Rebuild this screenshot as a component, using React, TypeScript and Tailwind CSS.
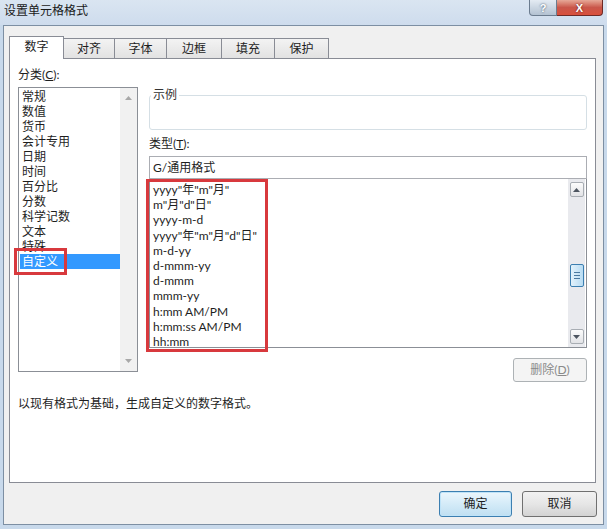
import React from 'react';

const categories = ['常规', '数值', '货币', '会计专用', '日期', '时间', '百分比', '分数', '科学记数', '文本', '特殊', '自定义'];
const formats = [
  'yyyy"年"m"月"',
  'm"月"d"日"',
  'yyyy-m-d',
  'yyyy"年"m"月"d"日"',
  'm-d-yy',
  'd-mmm-yy',
  'd-mmm',
  'mmm-yy',
  'h:mm AM/PM',
  'h:mm:ss AM/PM',
  'hh:mm',
];
const tabs = [
  { label: '对齐', w: 'w-[51px]' },
  { label: '字体', w: 'w-[52px]' },
  { label: '边框', w: 'w-[55px]' },
  { label: '填充', w: 'w-[53px]' },
  { label: '保护', w: 'w-[54px]' },
];

function Tri({ down, color }: { down?: boolean; color: string }) {
  return (
    <svg width="7" height="4" viewBox="0 0 7 4">
      <path d={down ? 'M0 0 L3.5 4 L7 0Z' : 'M0 4 L3.5 0 L7 4Z'} fill={color} />
    </svg>
  );
}

function ArrowBtn({ down }: { down?: boolean }) {
  return (
    <div className="w-[14px] h-[15px] mx-auto flex items-center justify-center rounded-[2px] border border-[#a8adb3] bg-gradient-to-b from-[#fcfcfc] to-[#e2e3e6]">
      <Tri down={down} color="#4d5560" />
    </div>
  );
}

export default function App() {
  return (
    <div className="w-[607px] h-[529px] bg-[#c8d9eb] flex flex-col overflow-hidden font-['Lato','Noto_Sans_CJK_SC',sans-serif] text-[12px] text-[#1e1e1e]">
      {/* Title bar */}
      <div className="h-[25px] shrink-0 flex items-start justify-between bg-gradient-to-b from-[#dae5f1] to-[#cedced]">
        <div className="pl-[4px] pt-[3px] leading-[16px] text-[#1a1a1a]">设置单元格格式</div>
        <div className="flex mr-[4px]">
          <div className="w-[28px] h-[16px] flex items-center justify-center rounded-bl-[4px] border border-t-0 border-[#6b7c8f] bg-gradient-to-b from-[#e4ebf3] to-[#b3c2d2] text-white font-bold font-['Liberation_Sans',sans-serif] text-[11px] leading-[12px] [text-shadow:0_0_2px_#2f4257]">
            ?
          </div>
          <div className="w-[46px] h-[16px] flex items-center justify-center rounded-br-[4px] border border-t-0 border-l-0 border-[#6e2a26] bg-gradient-to-b from-[#e6a898] via-[#c9564a] to-[#d9503c] text-white font-bold font-['Liberation_Sans',sans-serif] text-[11px] leading-[12px] [text-shadow:0_0_2px_#5a1410]">
            X
          </div>
        </div>
      </div>

      {/* Dialog body */}
      <div className="flex-1 mx-[3px] mb-[4px] border border-[#7d8fa3] bg-[#f0f0f0] flex flex-col pt-[10px] pl-[5px] pr-[7px]">
        {/* Tabs */}
        <div className="h-[22px] flex items-end shrink-0">
          <div className="relative z-10 -mb-px w-[55px] h-[23px] bg-white border border-b-0 border-[#898c95] flex items-start justify-center pt-[3px] leading-[14px]">
            数字
          </div>
          {tabs.map(t => (
            <div
              key={t.label}
              className={`${t.w} h-[20px] border-t border-r border-[#898c95] bg-gradient-to-b from-[#f3f3f3] to-[#e2e2e2] flex items-center justify-center leading-[14px]`}
            >
              {t.label}
            </div>
          ))}
        </div>

        {/* Tab panel */}
        <div className="h-[425px] shrink-0 bg-white border border-[#898c95] flex flex-col">
          <div className="flex gap-[11px] pl-[8px]">
            {/* Left: category */}
            <div className="pt-[9px] w-[120px]">
              <div className="leading-[14px]">
                分类(<span className="underline">C</span>):
              </div>
              <div className="mt-[5px] h-[285px] border border-[#8b8f96] flex">
                <div className="flex-1 pt-[1px] pl-[1px]">
                  {categories.map(c => (
                    <div
                      key={c}
                      className={`relative h-[15px] leading-[15px] pl-[2px] ${c === '自定义' ? 'bg-[#3399ff] text-white' : ''}`}
                    >
                      {c}
                      {c === '自定义' && (
                        <div className="absolute -left-[6px] -top-[6px] w-[53px] h-[27px] border-[3px] border-[#d8393d]" />
                      )}
                    </div>
                  ))}
                </div>
                <div className="w-[17px] bg-[#f1f1f1] flex flex-col items-center justify-between py-[8px]">
                  <Tri color="#a8a8a8" />
                  <Tri down color="#a8a8a8" />
                </div>
              </div>
            </div>

            {/* Right: sample + type */}
            <div className="pt-[30px] w-[438px]">
              <fieldset className="h-[41px] border border-[#d5dfe5] rounded-[3px]">
                <legend className="ml-[1px] px-[2px] leading-[12px] text-[#333]">示例</legend>
              </fieldset>
              <div className="mt-[7px] leading-[14px]">
                类型(<span className="underline">T</span>):
              </div>
              <div className="mt-[5px] h-[23px] border border-[#abadb3] pl-[3px] leading-[21px]">G/通用格式</div>
              <div className="relative h-[169px] border border-t-0 border-[#8b8f96] flex">
                <div className="flex-1 pt-[3px] pl-[3px]">
                  {formats.map(f => (
                    <div key={f} className="h-[15.2px] leading-[15.2px] whitespace-nowrap">
                      {f}
                    </div>
                  ))}
                </div>
                <div className="w-[17px] mr-[1px] bg-[#e9eaee] flex flex-col py-[3px]">
                  <ArrowBtn />
                  <div className="h-[67px]" />
                  <div className="w-[14px] h-[23px] mx-auto rounded-[2px] border border-[#3c7fb1] bg-gradient-to-r from-[#e3f2fb] to-[#b8dcf3] flex flex-col items-center justify-center gap-[2px]">
                    <div className="w-[6px] h-px bg-[#4b7aa0]" />
                    <div className="w-[6px] h-px bg-[#4b7aa0]" />
                    <div className="w-[6px] h-px bg-[#4b7aa0]" />
                  </div>
                  <div className="flex-1" />
                  <ArrowBtn down />
                </div>
                <div className="absolute -left-[4px] top-0 w-[122px] h-[173px] border-[3px] border-[#d8393d]" />
              </div>
              <div className="mt-[10px] flex justify-end">
                <div className="w-[74px] h-[24px] rounded-[3px] border border-[#adb2b5] bg-[#f4f4f4] text-[#8a8a8a] flex items-center justify-center">
                  删除(<span className="underline">D</span>)
                </div>
              </div>
            </div>
          </div>

          <div className="mt-[15px] pl-[8px] leading-[14px]">以现有格式为基础，生成自定义的数字格式。</div>
        </div>

        {/* Dialog buttons */}
        <div className="mt-[8px] -mr-px flex justify-end gap-[10px]">
          <div className="w-[73px] h-[26px] rounded-[3px] border border-[#3c7fb1] bg-gradient-to-b from-[#ecf6fc] via-[#d4ebf8] to-[#bfdff2] flex items-center justify-center shadow-[inset_0_0_0_1px_#bfe3f8]">
            确定
          </div>
          <div className="w-[75px] h-[26px] rounded-[3px] border border-[#707070] bg-gradient-to-b from-[#f2f2f2] via-[#e6e6e6] to-[#d3d3d3] flex items-center justify-center">
            取消
          </div>
        </div>
      </div>
    </div>
  );
}
